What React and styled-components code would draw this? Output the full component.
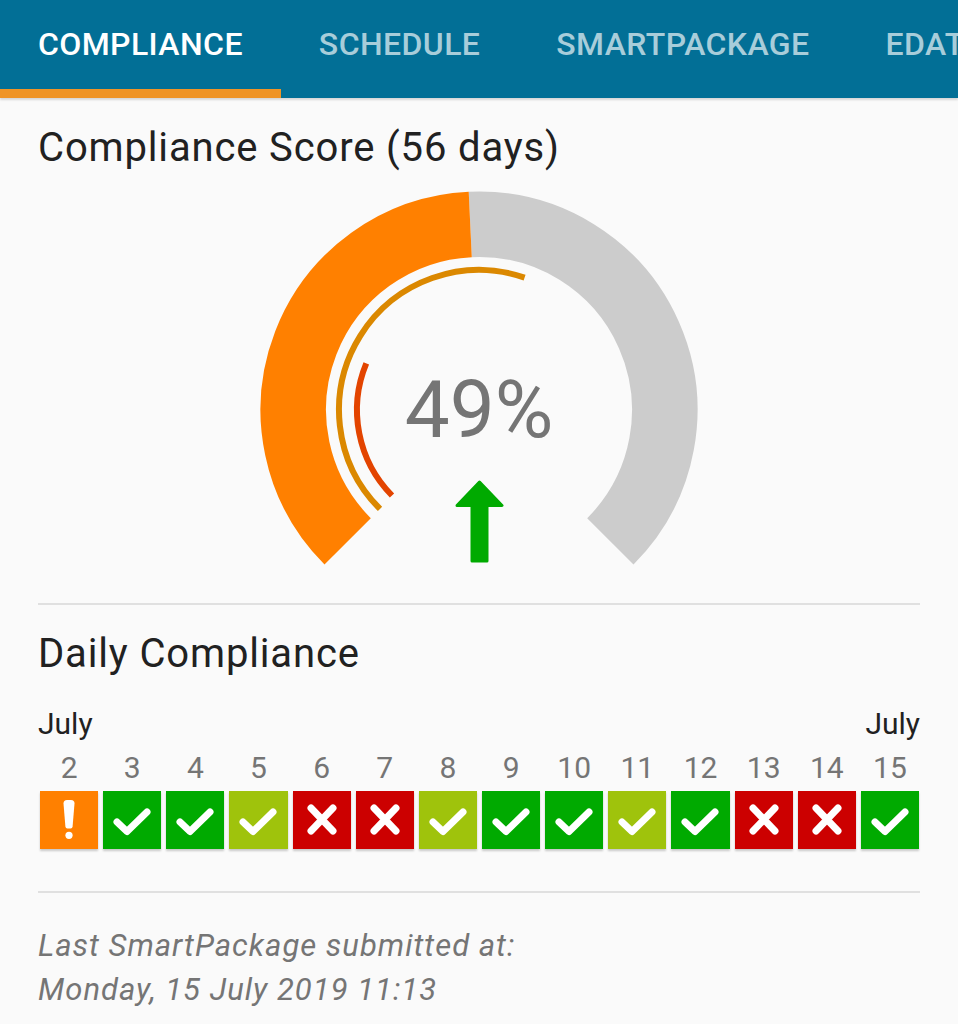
import React from "react";
import styled, { createGlobalStyle } from "styled-components";

const GlobalStyle = createGlobalStyle`
  html, body {
    margin: 0;
    padding: 0;
    background: #fafafa;
  }
  body {
    font-family: Roboto, "Noto Sans", sans-serif;
    color: #212121;
  }
`;

const Page = styled.div`
  width: 958px;
  min-height: 1024px;
  background: #fafafa;
  overflow: hidden;
`;

const TabBar = styled.div`
  display: flex;
  height: 98px;
  background: #026f96;
  box-shadow: 0 2px 2px rgba(0, 0, 0, 0.14);
  white-space: nowrap;
  overflow: hidden;
`;

const Tab = styled.div`
  flex: none;
  padding: 28px 38px 0;
  font-size: 32px;
  line-height: 32px;
  font-weight: 500;
  letter-spacing: 0.4px;
  color: ${(p) => (p.active ? "#ffffff" : "rgba(255, 255, 255, 0.66)")};
  border-bottom: 9px solid ${(p) => (p.active ? "#ef9426" : "transparent")};
  box-sizing: border-box;
  height: 98px;
`;

const Content = styled.div`
  padding: 30px 38px 0;
`;

const Heading = styled.h2`
  margin: 0;
  font-size: 40px;
  line-height: 40px;
  font-weight: 400;
  letter-spacing: 0.85px;
  color: #212121;
  margin-top: ${(p) => p.top || 0}px;
`;

const GaugeWrap = styled.div`
  display: flex;
  justify-content: center;
  margin-top: 20px;
`;

const Divider = styled.hr`
  margin: ${(p) => p.top}px 0 0;
  border: 0;
  height: 2px;
  background: #e0e0e0;
`;

const MonthRow = styled.div`
  display: flex;
  justify-content: space-between;
  margin-top: 35px;
  font-size: 30px;
  line-height: 30px;
  color: #212121;
`;

const DayGrid = styled.div`
  display: grid;
  grid-template-columns: repeat(14, 1fr);
  column-gap: 5px;
  padding: 0 1px 0 2px;
  margin-top: ${(p) => p.top}px;
`;

const DayNumber = styled.div`
  text-align: center;
  font-size: 30px;
  line-height: 30px;
  color: #757575;
`;

const DayBox = styled.div`
  height: 58px;
  display: flex;
  align-items: center;
  justify-content: center;
  background: ${(p) => p.color};
  box-shadow: 0 2px 2px rgba(0, 0, 0, 0.2);

  svg {
    display: block;
  }
`;

const Footer = styled.p`
  margin: 31px 0 0;
  font-size: 31px;
  line-height: 44px;
  letter-spacing: 1px;
  font-style: italic;
  color: #757575;
`;

const COLORS = {
  full: "#00aa00",
  partial: "#9fc30c",
  missed: "#cc0000",
  warn: "#ff8000",
};

const days = [
  { d: 2, s: "warn" },
  { d: 3, s: "full" },
  { d: 4, s: "full" },
  { d: 5, s: "partial" },
  { d: 6, s: "missed" },
  { d: 7, s: "missed" },
  { d: 8, s: "partial" },
  { d: 9, s: "full" },
  { d: 10, s: "full" },
  { d: 11, s: "partial" },
  { d: 12, s: "full" },
  { d: 13, s: "missed" },
  { d: 14, s: "missed" },
  { d: 15, s: "full" },
];

const StatusIcon = ({ status }) => {
  if (status === "warn") {
    return (
      <svg width="58" height="58" viewBox="0 0 58 58">
        <path
          d="M23.5 12.5 Q23.5 9 27 9 L31 9 Q34.5 9 34.5 12.5 L32.6 35.5 Q32.4 37.5 30.6 37.5 L27.4 37.5 Q25.6 37.5 25.4 35.5 Z"
          fill="#fff"
        />
        <circle cx="29" cy="44.3" r="3.6" fill="#fff" />
      </svg>
    );
  }
  if (status === "missed") {
    return (
      <svg width="58" height="58" viewBox="0 0 58 58">
        <path
          d="M18 17 L40 40 M40 17 L18 40"
          stroke="#fff"
          strokeWidth="7"
          strokeLinecap="round"
          fill="none"
        />
      </svg>
    );
  }
  return (
    <svg width="58" height="58" viewBox="0 0 58 58">
      <path
        d="M14 31 L24 40.5 L44 21"
        stroke="#fff"
        strokeWidth="7"
        strokeLinecap="round"
        strokeLinejoin="round"
        fill="none"
      />
    </svg>
  );
};

const CX = 220;
const CY = 222;

const polar = (r, deg) => {
  const a = (deg * Math.PI) / 180;
  return [CX + r * Math.sin(a), CY - r * Math.cos(a)];
};

const arc = (r, a0, a1) => {
  const [x0, y0] = polar(r, a0);
  const [x1, y1] = polar(r, a1);
  const large = a1 - a0 > 180 ? 1 : 0;
  return `M${x0} ${y0} A${r} ${r} 0 ${large} 1 ${x1} ${y1}`;
};

const Gauge = ({ score }) => {
  const split = -135 + (270 * score) / 100;
  return (
    <svg width="440" height="382" viewBox="0 0 440 382">
      <path d={arc(185.75, split, 135)} stroke="#cccccc" strokeWidth="65.5" fill="none" />
      <path d={arc(185.75, -135, split)} stroke="#ff8000" strokeWidth="65.5" fill="none" />
      <path d={arc(140, -135, 19)} stroke="#db8800" strokeWidth="6" fill="none" />
      <path d={arc(122, -134.5, -67.5)} stroke="#e34400" strokeWidth="6" fill="none" />
      <text
        x={CX}
        y="249"
        textAnchor="middle"
        fontFamily="Roboto, sans-serif"
        fontSize="80"
        fill="#757575"
      >
        {score}%
      </text>
      <path
        d="M220.5 294 L243 317.5 L228 317.5 L228 373 L213 373 L213 317.5 L198 317.5 Z"
        fill="#00aa00"
        stroke="#00aa00"
        strokeWidth="3"
        strokeLinejoin="round"
      />
    </svg>
  );
};

export default function App() {
  return (
    <Page>
      <GlobalStyle />
      <TabBar>
        <Tab active>COMPLIANCE</Tab>
        <Tab>SCHEDULE</Tab>
        <Tab>SMARTPACKAGE</Tab>
        <Tab>EDATA</Tab>
      </TabBar>
      <Content>
        <Heading>Compliance Score (56 days)</Heading>
        <GaugeWrap>
          <Gauge score={49} />
        </GaugeWrap>
        <Divider top={33} />
        <Heading top={29}>Daily Compliance</Heading>
        <MonthRow>
          <span>July</span>
          <span>July</span>
        </MonthRow>
        <DayGrid top={14}>
          {days.map((day) => (
            <DayNumber key={day.d}>{day.d}</DayNumber>
          ))}
        </DayGrid>
        <DayGrid top={8}>
          {days.map((day) => (
            <DayBox key={day.d} color={COLORS[day.s]}>
              <StatusIcon status={day.s} />
            </DayBox>
          ))}
        </DayGrid>
        <Divider top={42} />
        <Footer>
          Last SmartPackage submitted at:
          <br />
          Monday, 15 July 2019 11:13
        </Footer>
      </Content>
    </Page>
  );
}
